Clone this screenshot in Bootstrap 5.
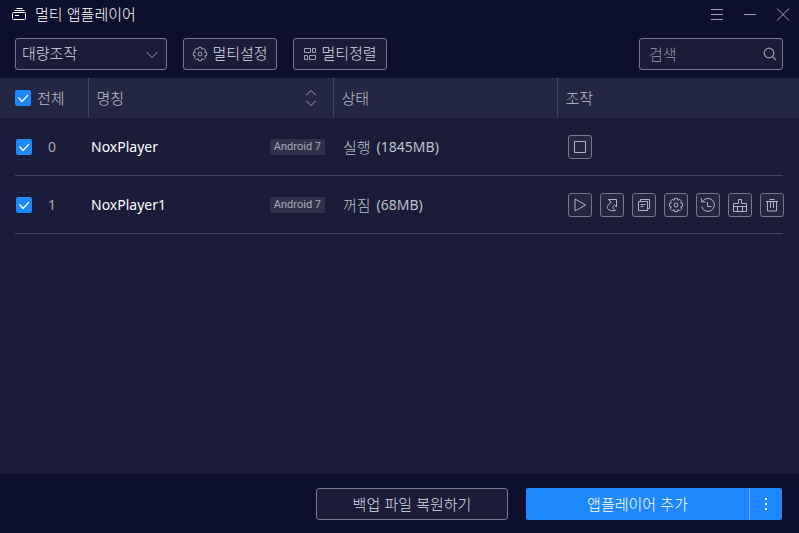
<!DOCTYPE html>
<html lang="ko" data-bs-theme="dark">
<head>
<meta charset="utf-8">
<meta name="viewport" content="width=device-width, initial-scale=1">
<title>멀티 앱플레이어</title>
<link rel="stylesheet" href="https://cdn.jsdelivr.net/npm/bootstrap@5.3.0/dist/css/bootstrap.min.css">
<style>
  :root { --ink: #0d0f2e; --panel: #1a1c3a; --head: #242744; --edge: #77798b; --line: #45465f; --soft: #bfc0ca; --accent: #1e88ff; }
  body { background: var(--panel); color: var(--soft); font: 300 15px/20px "Noto Sans CJK KR", "Noto Sans", sans-serif; }
  svg { display: block; fill: none; stroke: currentColor; }
  .latin { font-family: "Noto Sans", "Noto Sans CJK KR", sans-serif; font-weight: 400; font-size: 14px; }
  .num { color: #a9aab7; }
  .topbar, .bottombar { background: var(--ink); }
  .titlebar { height: 28px; padding-left: 12px; padding-right: 9px; }
  .titlebar h1 { font-size: 15px; font-weight: 300; line-height: 20px; color: #fff; }
  .win-btn { color: #a3a4b3; }
  .tools { padding: 10px 16px 8px 15px; gap: 16px; }
  .ctl { height: 32px; border: 1px solid var(--edge); border-radius: 3px; background-color: var(--panel); color: #dcdde2; font-size: 15px; font-weight: 300; line-height: 20px; }
  .pick { width: 152px; }
  .pick select { appearance: none; padding: 0 32px 2px 6px; color: inherit; font-weight: 300; }
  .pick svg, .find svg { pointer-events: none; color: #9a9ba9; }
  .pick svg { right: 7px; top: 9px; }
  .find { width: 144px; }
  .find input { padding: 0 32px 2px 9px; color: inherit; font-weight: 300; }
  .find input::placeholder { color: #9a9ba9; }
  .find svg { right: 5px; top: 8px; }
  .tool { width: 94px; gap: 4px; }
  .tool span { padding-bottom: 2px; }
  .tool svg { color: #a3a4b3; }
  .players { table-layout: fixed; }
  .players th { height: 40px; background: var(--head); font-weight: 300; padding-bottom: 2px; }
  .players th + th { border-left: 1px solid var(--line); padding-left: 8px; }
  .players tbody tr { height: 58px; background: linear-gradient(var(--line), var(--line)) 15px 100% / calc(100% - 31px) 1px no-repeat; }
  .players td { padding-left: 10px; }
  .players th:first-child { padding-left: 15px; }
  .players td:first-child { padding-left: 16px; }
  .players td:nth-child(2) { padding-left: 3px; }
  .players td:last-child { padding-left: 11px; }
  .c-all { width: 88px; } .c-name { width: 245px; } .c-state { width: 224px; }
  .state { gap: 6px; }
  .all-box { gap: 6px; }
  .form-check-input.tick { width: 16px; height: 16px; margin: 0; border: 0; border-radius: 2px; }
  .form-check-input.tick:checked { background-color: var(--accent); background-image: url("data:image/svg+xml,%3Csvg xmlns='http://www.w3.org/2000/svg' viewBox='0 0 16 16'%3E%3Cpath d='M3.500 7.500l3.500 4 6-6.500' fill='none' stroke='%23fff' stroke-width='1.200'/%3E%3C/svg%3E"); }
  .ver { background: #30324d; color: #a9aab7; font: 400 11px/16px Roboto, sans-serif; padding: 0 4px; margin-right: 7px; border-radius: 1px; }
  .act { width: 24px; height: 24px; border: 1px solid var(--edge); border-radius: 3px; background: #242642; color: #b4b5c0; }
  .bottombar { padding: 14px 17px 13px; gap: 18px; }
  .restore { width: 192px; }
  .add { width: 256px; height: 32px; border-radius: 2px; overflow: hidden; }
  .add button { background: var(--accent); color: #fff; font-weight: 300; }
  .add .more { width: 33px; border-left: 1px solid #6db2ff !important; }
</style>
</head>
<body class="d-flex flex-column vh-100 overflow-hidden">
<svg class="d-none" aria-hidden="true">
  <symbol id="gear" viewBox="0 0 16 16"><circle cx="8" cy="8" r="2"/><path d="M14.650 9.410L12.620 9.910L13.700 11.700L11.700 13.700L9.910 12.620L9.410 14.650H6.590L6.090 12.620L4.300 13.700L2.300 11.700L3.380 9.910L1.350 9.410V6.590L3.380 6.090L2.300 4.300L4.300 2.300L6.090 3.380L6.590 1.350H9.410L9.910 3.380L11.700 2.300L13.700 4.300L12.620 6.090L14.650 6.590Z" stroke-linejoin="round"/></symbol>
</svg>

<header class="topbar">
  <div class="titlebar d-flex align-items-center justify-content-between">
    <div class="d-flex align-items-center gap-2">
      <svg width="15" height="13" viewBox="0 0 15 13"  stroke-width="1" class="text-white"><path d="M4.500 .5h6M2.500 2.500h10M3 7.500h4"/><rect x=".5" y="4.500" width="13" height="7" rx="1"/></svg>
      <h1 class="mb-0">멀티 앱플레이어</h1>
    </div>
    <div class="d-flex align-items-center gap-3">
      <button class="win-btn btn p-0 border-0" aria-label="메뉴"><svg width="18" height="14" viewBox="0 0 18 14"><path d="M3 2.500h12M3 7.500h12M3 12.500h12"/></svg></button>
      <button class="win-btn btn p-0 border-0" aria-label="최소화"><svg width="16" height="14" viewBox="0 0 16 14"><path d="M2 7.500h12"/></svg></button>
      <button class="win-btn btn p-0 border-0" aria-label="닫기"><svg width="16" height="14" viewBox="0 0 16 14"><path d="M3 1.500l12 12M15 1.500L3 13.500"/></svg></button>
    </div>
  </div>
  <div class="tools d-flex align-items-center">
    <div class="ctl pick position-relative">
      <select class="w-100 h-100 border-0 bg-transparent" aria-label="대량조작"><option>대량조작</option></select>
      <svg class="position-absolute" width="14" height="14" viewBox="0 0 14 14"><path d="M1.500 4L7 9.500L12.500 4"/></svg>
    </div>
    <button class="ctl tool d-flex align-items-center justify-content-center p-0"><svg width="16" height="16"><use href="#gear"/></svg><span>멀티설정</span></button>
    <button class="ctl tool d-flex align-items-center justify-content-center p-0"><svg width="14" height="14" viewBox="0 0 14 14"><path d="M1.500 1.500h6v4h-6zM9.500 1.500h3v4h-3zM1.500 8.500h3v4h-3zM6.500 8.500h6v4h-6z"/></svg><span>멀티정렬</span></button>
    <div class="ctl find position-relative ms-auto">
      <input type="text" class="w-100 h-100 border-0 bg-transparent" placeholder="검색" aria-label="검색">
      <svg class="position-absolute" width="14" height="14" viewBox="0 0 14 14" stroke-width="1.200"><circle cx="6" cy="6" r="4.800"/><path d="M9.500 9.500l3.500 3.500"/></svg>
    </div>
  </div>
</header>

<main class="flex-grow-1">
  <table class="players w-100">
    <colgroup><col class="c-all"><col class="c-name"><col class="c-state"><col></colgroup>
    <thead>
      <tr>
        <th scope="col"><div class="all-box d-flex align-items-center"><input class="form-check-input tick" type="checkbox" id="all" checked><label for="all">전체</label></div></th>
        <th scope="col"><div class="d-flex align-items-center justify-content-between"><span>명칭</span><button class="win-btn btn p-0 border-0 me-3" aria-label="정렬"><svg width="10" height="18" viewBox="0 0 10 18"><path d="M0 6.500L5 1.500l5 5M0 11.500l5 5 5-5"/></svg></button></div></th>
        <th scope="col">상태</th>
        <th scope="col">조작</th>
      </tr>
    </thead>
    <tbody>
      <tr>
        <td><div class="d-flex align-items-center gap-3"><input class="form-check-input tick" type="checkbox" id="p0" checked><label for="p0" class="latin num">0</label></div></td>
        <td><div class="d-flex align-items-center justify-content-between"><span class="latin text-white">NoxPlayer</span><span class="ver">Android 7</span></div></td>
        <td><div class="state d-flex"><span>실행</span><span class="latin">(1845MB)</span></div></td>
        <td><div class="d-flex gap-2"><button class="act p-0 d-flex align-items-center justify-content-center" aria-label="정지"><svg width="16" height="16" viewBox="0 0 16 16"><path d="M2.500 2.500h11v11h-11z"/></svg></button></div></td>
      </tr>
      <tr>
        <td><div class="d-flex align-items-center gap-3"><input class="form-check-input tick" type="checkbox" id="p1" checked><label for="p1" class="latin num">1</label></div></td>
        <td><div class="d-flex align-items-center justify-content-between"><span class="latin text-white">NoxPlayer1</span><span class="ver">Android 7</span></div></td>
        <td><div class="state d-flex"><span>꺼짐</span><span class="latin">(68MB)</span></div></td>
        <td><div class="d-flex gap-2">
          <button class="act p-0 d-flex align-items-center justify-content-center" aria-label="실행"><svg width="16" height="16" viewBox="0 0 16 16"><path d="M3 2v12l10.500-6z"/></svg></button>
          <button class="act p-0 d-flex align-items-center justify-content-center" aria-label="바로가기"><svg width="16" height="16" viewBox="0 0 16 16"><path d="M4.500 2.500H12.500V10L10.500 8C8.500 9.500 8 11.500 11.500 13.500C6 14.500 3.500 12.500 3.500 10.500C3.500 8 5.500 6.500 7.300 5.300Z" stroke-linejoin="round"/></svg></button>
          <button class="act p-0 d-flex align-items-center justify-content-center" aria-label="복사"><svg width="16" height="16" viewBox="0 0 16 16"><path d="M2.500 4.500h9v9h-9zM4.500 4V2.500h9v9H12M4.500 7.500h5M4.500 9.500h3"/></svg></button>
          <button class="act p-0 d-flex align-items-center justify-content-center" aria-label="설정"><svg width="16" height="16"><use href="#gear"/></svg></button>
          <button class="act p-0 d-flex align-items-center justify-content-center" aria-label="백업"><svg width="16" height="16" viewBox="0 0 16 16"><path d="M2.200 4.800A6.500 6.500 0 1 1 1.600 9.500M1.500 1.500V5H5.500M7.500 5v4.500h4"/></svg></button>
          <button class="act p-0 d-flex align-items-center justify-content-center" aria-label="정리"><svg width="16" height="16" viewBox="0 0 16 16"><path d="M6.500 6V2.500h3V6.500h5v8h-13v-8h5M1.500 9.500h13M5.500 10v4M10.500 10v4"/></svg></button>
          <button class="act p-0 d-flex align-items-center justify-content-center" aria-label="삭제"><svg width="16" height="16" viewBox="0 0 16 16"><path d="M2 4.500h12M5.500 2.500h5M3.500 4.500v9.500h9V4.500M6.500 5v6M9.500 5v6"/></svg></button>
        </div></td>
      </tr>
    </tbody>
  </table>
</main>

<footer class="bottombar d-flex justify-content-end">
  <button class="ctl restore p-0">백업 파일 복원하기</button>
  <div class="add d-flex">
    <button class="flex-grow-1 border-0 p-0">앱플레이어 추가</button>
    <button class="more border-0 p-0 d-flex align-items-center justify-content-center" aria-label="더보기"><svg width="4" height="12" viewBox="0 0 4 12" stroke="none"><path d="M1 0h2v2H1zM1 5h2v2H1zM1 10h2v2H1z" fill="#fff" stroke="none"/></svg></button>
  </div>
</footer>
<script src="https://cdn.jsdelivr.net/npm/bootstrap@5.3.0/dist/js/bootstrap.bundle.min.js"></script>
</body>
</html>
